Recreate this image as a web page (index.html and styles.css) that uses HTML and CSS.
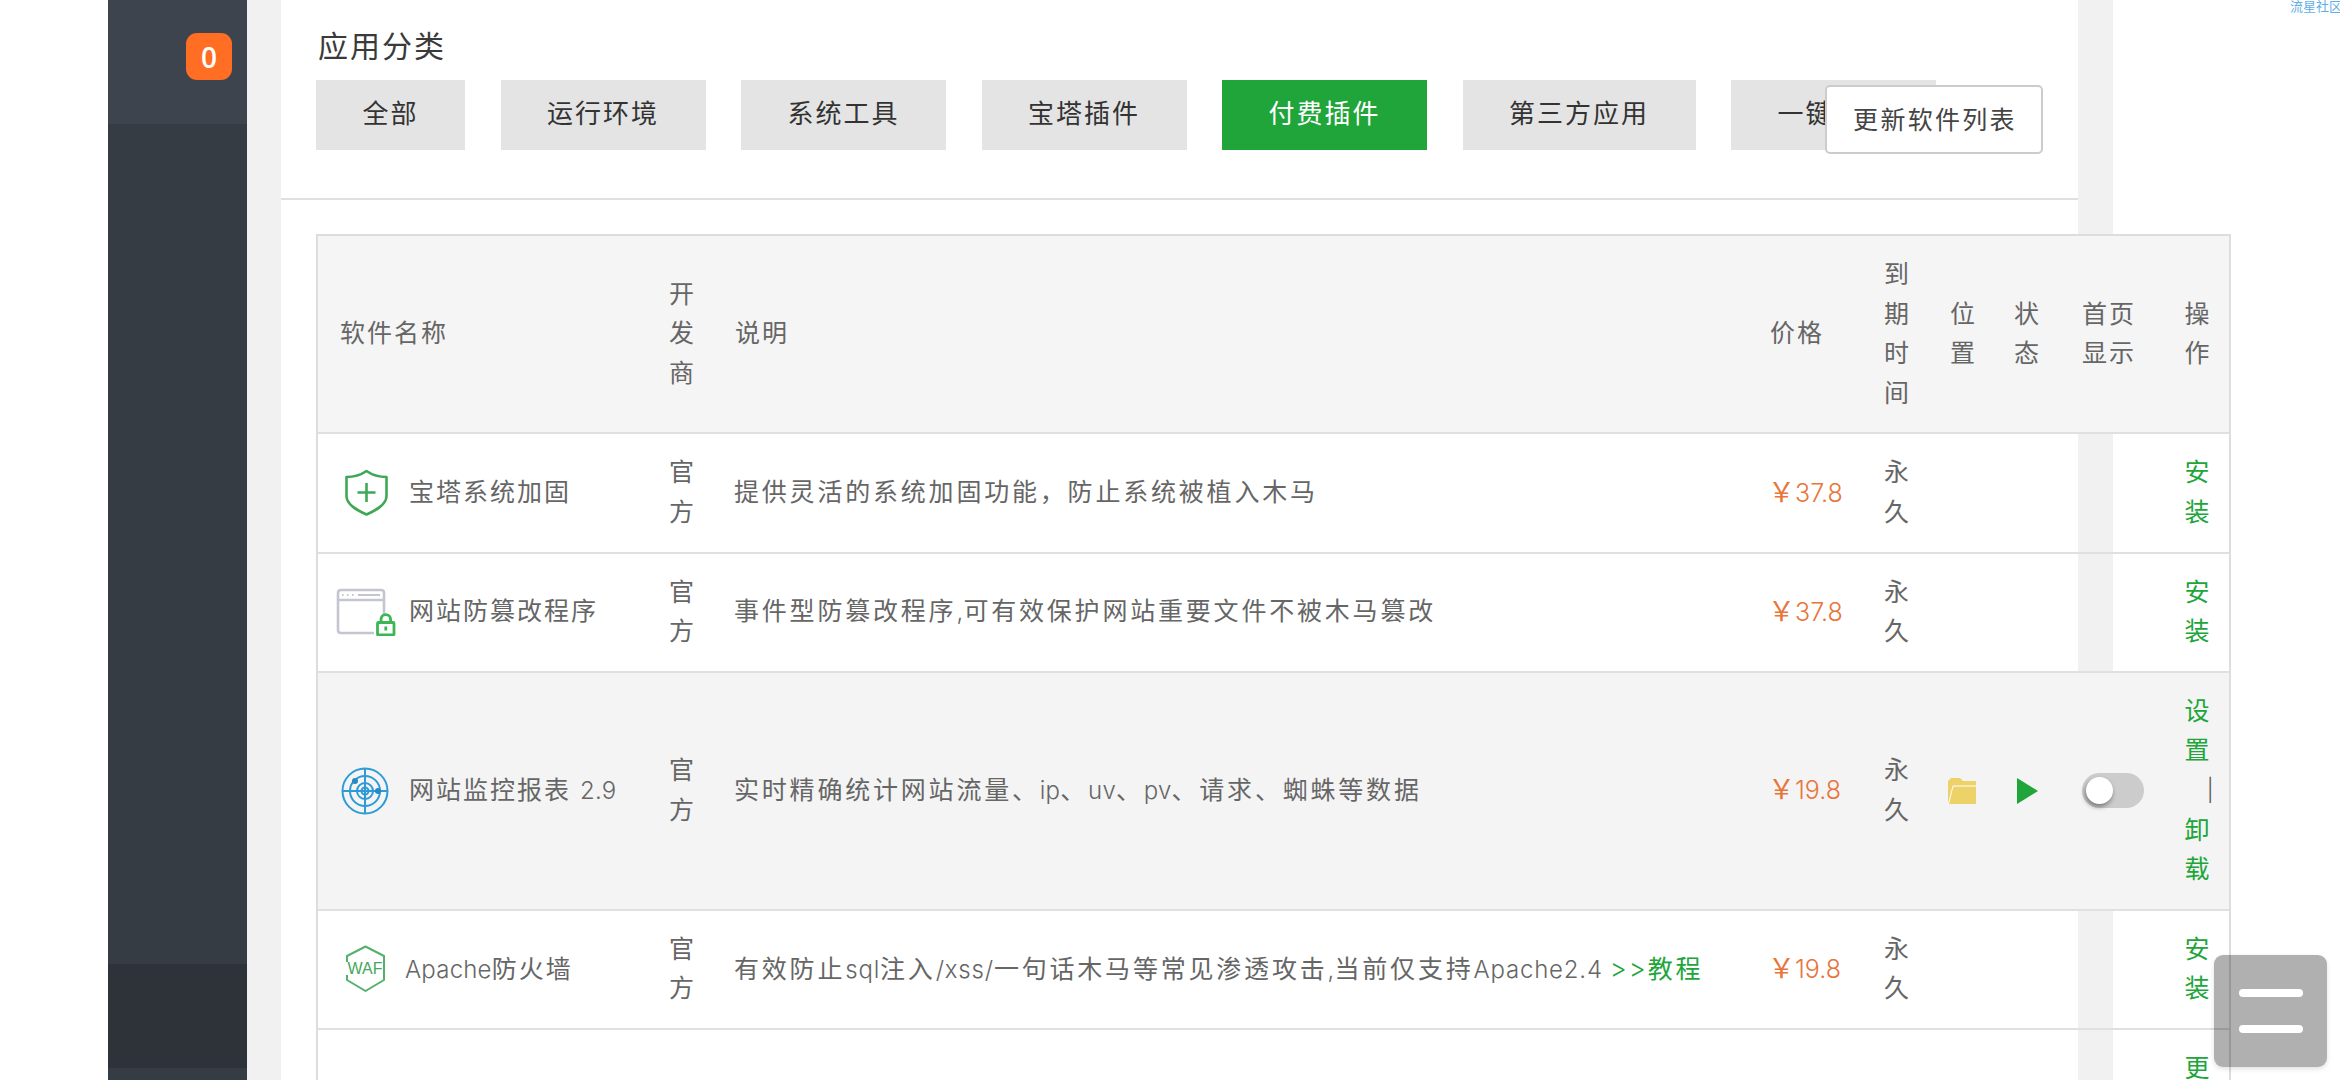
FILE: index.html
```html
<!DOCTYPE html>
<html lang="zh-CN">
<head>
<meta charset="utf-8">
<title>软件管理</title>
<link rel="stylesheet" href="styles.css">
</head>
<body>
<div class="page">
  <div class="margin-left"></div>
  <aside class="sidebar">
    <div class="side-top"><span class="badge">0</span></div>
    <div class="side-mid"></div>
    <div class="side-dark"></div>
    <div class="side-end"></div>
  </aside>
  <div class="gutter"></div>
  <main class="card">
    <div class="head">
      <h2 class="title">应用分类</h2>
      <div class="tabs">
        <span class="tab">全部</span>
        <span class="tab">运行环境</span>
        <span class="tab">系统工具</span>
        <span class="tab">宝塔插件</span>
        <span class="tab active">付费插件</span>
        <span class="tab">第三方应用</span>
        <span class="tab">一键部署</span>
      </div>
      <button class="refresh">更新软件列表</button>
    </div>
    <table class="soft">
      <colgroup>
        <col class="c-name"><col class="c-dev"><col class="c-desc"><col class="c-price"><col class="c-exp"><col class="c-pos"><col class="c-state"><col class="c-home"><col class="c-op">
      </colgroup>
      <thead>
        <tr><th>软件名称</th><th>开发商</th><th>说明</th><th>价格</th><th>到期时间</th><th>位置</th><th>状态</th><th>首页显示</th><th class="op">操作</th></tr>
      </thead>
      <tbody>
        <tr>
          <td class="name"><div class="name-in">
            <svg class="ico" viewBox="0 0 66 48"><path class="st-green" d="M13.5 8 Q25 8 33.5 2 Q42 8 53.500 8 V27 C53.500 36 42 41.500 33.500 45.500 C25 41.500 13.500 36 13.500 27 Z"/><path class="st-green" d="M33.500 14 V33 M24.500 23.500 H42.500"/></svg>
            <span>宝塔系统加固</span></div></td>
          <td>官方</td>
          <td class="desc">提供灵活的系统加固功能，防止系统被植入木马</td>
          <td class="price"><span class="yen">￥</span><span class="lat">37.8</span></td>
          <td>永久</td><td></td><td></td><td></td>
          <td class="op"><a class="link">安装</a></td>
        </tr>
        <tr>
          <td class="name"><div class="name-in">
            <svg class="ico" viewBox="0 0 66 48"><path class="st-gray" d="M51 27 V5 Q51 2 48 2 H8 Q5 2 5 5 V42 Q5 45 8 45 H41"/><path class="st-gray" d="M5 12 H51"/><path class="st-gray-thin" d="M9 7 H10.500 M14 7 H15.500 M19 7 H20.500 M25 7 H47"/><rect class="st-lock" x="44.500" y="34.500" width="16.500" height="12.500" rx="1"/><path class="st-lock" d="M48 34.500 V31.500 a4.800 4.800 0 0 1 9.600 0 V34.500"/><path class="st-lock" d="M52.800 38.500 V42.500"/></svg>
            <span>网站防篡改程序</span></div></td>
          <td>官方</td>
          <td class="desc">事件型防篡改程序<span class="lat">,</span>可有效保护网站重要文件不被木马篡改</td>
          <td class="price"><span class="yen">￥</span><span class="lat">37.8</span></td>
          <td>永久</td><td></td><td></td><td></td>
          <td class="op"><a class="link">安装</a></td>
        </tr>
        <tr class="on">
          <td class="name"><div class="name-in">
            <svg class="ico" viewBox="0 0 66 48"><g class="st-blue"><circle cx="32" cy="24" r="22.500"/><circle cx="32" cy="24" r="15"/><circle cx="32" cy="24" r="8"/><circle cx="32" cy="24" r="3.500"/><path d="M32 1 V47 M9 24 H55"/></g><circle class="fl-blue" cx="22" cy="14" r="3"/><circle class="fl-blue" cx="45" cy="24" r="3"/></svg>
            <span>网站监控报表 <span class="lat">2.9</span></span></div></td>
          <td>官方</td>
          <td class="desc">实时精确统计网站流量、<span class="lat">ip</span>、<span class="lat">uv</span>、<span class="lat">pv</span>、请求、蜘蛛等数据</td>
          <td class="price"><span class="yen">￥</span><span class="lat">19.8</span></td>
          <td>永久</td>
          <td class="tool"><svg class="folder" viewBox="0 0 28 26"><path class="fl-folder" d="M3 0 H12 L15 3 H28 V26 H0 V3 Z"/><path class="st-white" d="M0.500 26 L5 8 H28"/></svg></td>
          <td class="tool play-cell"><svg class="play" viewBox="0 0 21 26"><path class="fl-green" d="M0 0 L21 13 L0 26 Z"/></svg></td>
          <td class="tool switch-cell"><span class="switch"><span class="knob"></span></span></td>
          <td class="op"><a class="link">设置</a><span class="sep">|</span><a class="link">卸载</a></td>
        </tr>
        <tr>
          <td class="name"><div class="name-in waf">
            <svg class="ico ico-waf" viewBox="0 0 66 48"><path class="st-waf" d="M14 17 V11 L32.500 1.500 L51 11 V35 L32.500 46 L14 35 V30"/><text class="waf-t" x="32" y="29">WAF</text></svg>
            <span><span class="lat">Apache</span>防火墙</span></div></td>
          <td>官方</td>
          <td class="desc">有效防止<span class="lat wide">sql</span>注入<span class="lat wide">/xss/</span>一句话木马等常见渗透攻击<span class="lat">,</span>当前仅支持<span class="lat wide">Apache2.4</span> <a class="link"><span class="arrows">&gt;&gt;</span>教程</a></td>
          <td class="price"><span class="yen">￥</span><span class="lat">19.8</span></td>
          <td>永久</td><td></td><td></td><td></td>
          <td class="op"><a class="link">安装</a></td>
        </tr>
        <tr>
          <td></td><td></td><td></td><td></td><td></td><td></td><td></td><td></td>
          <td class="op"><a class="link">更新</a></td>
        </tr>
      </tbody>
    </table>
  </main>
  <div class="gutter gutter-r"></div>
  <div class="right"><span class="brand">流星社区</span></div>
</div>
<button class="fab"><span class="bar"></span><span class="bar"></span></button>
</body>
</html>
```

FILE: styles.css
```css
* { box-sizing: border-box; }
html, body { margin: 0; padding: 0; background: #fff; }
body {
  width: 2340px;
  height: 1080px;
  overflow: hidden;
  font-family: Inter, "Noto Sans CJK SC", sans-serif;
  color: #666;
}
.page { display: flex; width: 2340px; height: 1080px; }
.margin-left { width: 108px; flex: none; }

.sidebar { width: 139px; flex: none; display: flex; flex-direction: column; background: #363c44; }
.side-top { height: 124px; background: #3d444e; display: flex; justify-content: flex-end; align-items: flex-start; padding: 33px 15px 0 0; }
.side-mid { height: 840px; }
.side-dark { height: 104px; background: #2e3339; }
.side-end { flex: 1; }
.badge {
  width: 46px; height: 47px; border-radius: 11px; background: #ff6e23; color: #fff;
  font-family: "Open Sans", sans-serif; font-size: 28px; font-weight: 600;
  display: flex; align-items: center; justify-content: center;
}

.gutter { width: 34px; flex: none; background: #f1f1f1; }
.gutter-r { width: 35px; }
.right { flex: 1; display: flex; justify-content: flex-end; align-items: flex-start; overflow: hidden; }
.brand { font-size: 13px; line-height: 12px; color: #62aee6; white-space: nowrap; margin-right: -2px; font-weight: 400; }

.card { width: 1797px; flex: none; background: #fff; position: relative; }
.head { position: relative; height: 200px; padding: 25px 0 0 35px; border-bottom: 2px solid #e0e0e0; }
.title { margin: 0 0 13px 2px; font-size: 30px; line-height: 42px; font-weight: 400; letter-spacing: 2px; color: #3a3a3a; }
.tabs { display: flex; gap: 35.5px; }
.tab {
  height: 70px; padding: 0 46.5px; background: #e4e4e4; color: #333;
  font-size: 26px; letter-spacing: 2px; line-height: 68px; white-space: nowrap;
}
.tab.active { background: #20a53a; color: #fff; }
.refresh {
  position: absolute; top: 85px; right: 35px; width: 218px; height: 69px;
  background: #fff; border: 2px solid #ccc; border-radius: 5px; padding: 0 0 3px 2px;
  font-family: inherit; font-size: 25px; letter-spacing: 2.3px; color: #444;
}

.soft {
  table-layout: fixed; width: 1915px; margin: 34px 0 0 35px;
  border-collapse: separate; border-spacing: 0;
  border: 2px solid #ddd; border-bottom: 0;
  font-size: 25px; line-height: 39.6px; letter-spacing: 2px;
}
.c-name { width: 329px; } .c-dev { width: 66px; } .c-desc { width: 1035px; }
.c-price { width: 114px; } .c-exp { width: 66px; } .c-pos { width: 64px; }
.c-state { width: 68px; } .c-home { width: 103px; } .c-op { width: 66px; }

.soft th, .soft td {
  padding: 19px 22px; border-bottom: 2px solid #e0e0e0;
  text-align: left; font-weight: 400; vertical-align: middle; color: #666;
}
.soft th { background: #f5f5f5; }
.soft tr.on td { background: #f4f4f4; }
.soft .op { text-align: right; padding: 19px 17.5px 19px 0; }
.soft .name { padding-left: 15px; padding-right: 0; }
.soft .desc { letter-spacing: 2.8px; padding-left: 21px; padding-right: 0; }
.soft .price { white-space: nowrap; color: #e8753a; padding-left: 20px; padding-right: 0; }
.soft .tool { padding-left: 20px; padding-right: 0; }
.soft .play-cell { padding-left: 25px; }
.soft .switch-cell { padding-left: 22px; }

.name-in { display: flex; align-items: center; gap: 10px; }
.name-in.waf { gap: 6px; }
.ico { width: 66px; height: 48px; flex: none; display: block; }
.lat { font-weight: 300; font-size: 24px; letter-spacing: 0.2px; }
.lat.wide { letter-spacing: 0.8px; }
.arrows { font-weight: 300; font-size: 26px; letter-spacing: 2px; margin-left: -3px; }
.price .lat { font-size: 25px; letter-spacing: 0; }
.yen { letter-spacing: 0; font-size: 27px; }
.link { color: #20a53a; }
.sep { display: block; font-weight: 300; letter-spacing: 0; margin-right: -2px; color: #555; font-size: 22px; }

.st-green { fill: none; stroke: #3fa857; stroke-width: 2.6; stroke-linejoin: round; }
.st-gray { fill: none; stroke: #c4c5d0; stroke-width: 2.6; }
.st-gray-thin { fill: none; stroke: #c4c5d0; stroke-width: 2; }
.st-lock { fill: none; stroke: #3cb554; stroke-width: 2.8; }
.st-blue { fill: none; stroke: #2e9bd6; stroke-width: 2; }
.fl-blue { fill: #2789c4; }
.st-waf { fill: none; stroke: #55b06a; stroke-width: 2; stroke-linejoin: round; }
.waf-t { font-family: "Liberation Sans", sans-serif; font-size: 16px; fill: #44a85d; text-anchor: middle; letter-spacing: 0; font-weight: 400; }
.fl-folder { fill: #ecd268; }
.st-white { fill: none; stroke: #fff; stroke-width: 1; }
.fl-green { fill: #20a53a; }
.folder { width: 28px; height: 26px; display: block; }
.play { width: 21px; height: 26px; display: block; }

.switch { display: block; width: 62px; height: 35px; border-radius: 18px; background: #ccc; position: relative; }
.knob {
  position: absolute; left: 4px; top: 4px; width: 27px; height: 27px; border-radius: 50%;
  background: #fff; box-shadow: -1px 3px 5px rgba(0, 0, 0, .4);
}

.fab {
  position: fixed; left: 2214px; top: 955px; width: 113px; height: 112px; padding: 0;
  border: 0; border-radius: 9px; background: rgba(0, 0, 0, .31);
  box-shadow: 0 2px 5px rgba(0, 0, 0, .12);
  display: flex; flex-direction: column; align-items: center; justify-content: center; gap: 28px;
}
.bar { width: 64px; height: 8px; border-radius: 4px; background: #fff; }
```
